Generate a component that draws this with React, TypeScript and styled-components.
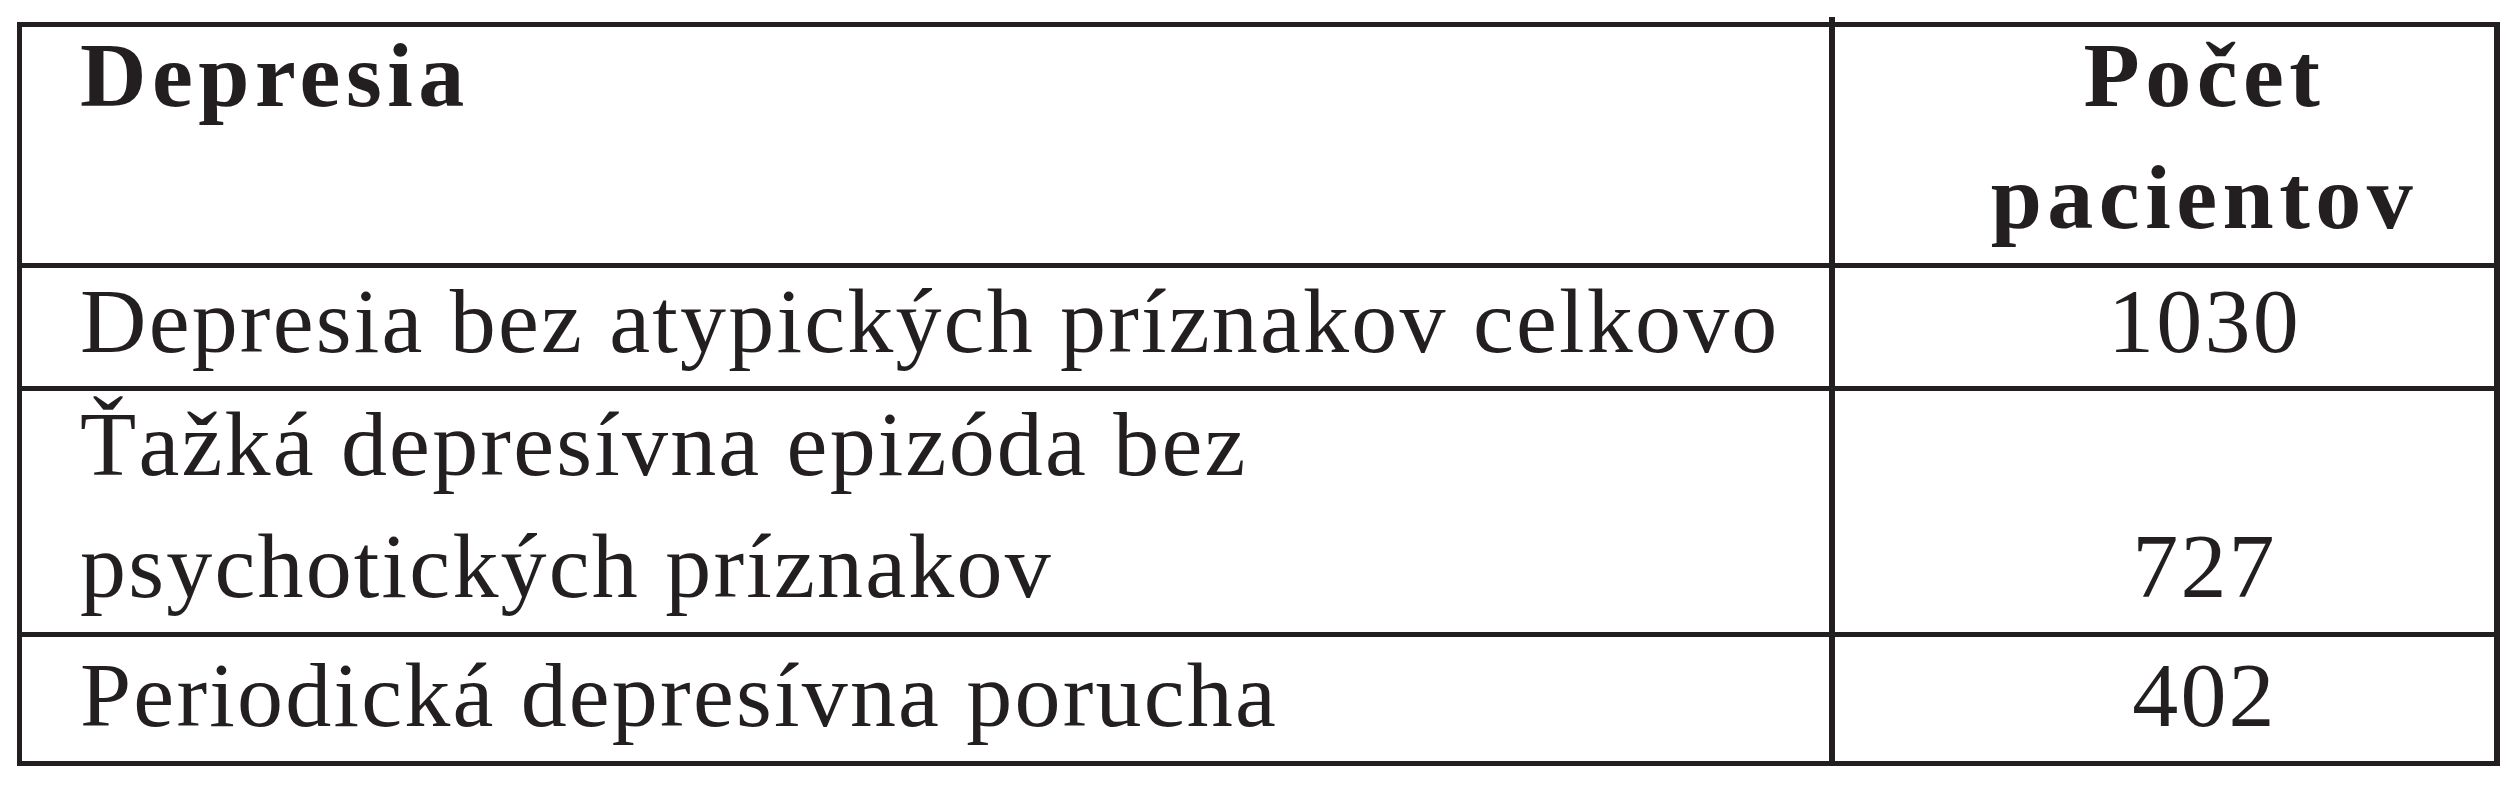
import React from 'react';
import styled, { createGlobalStyle } from 'styled-components';

const INK = '#231f20';
const LINE = 122;

const GlobalStyle = createGlobalStyle`
  html, body {
    margin: 0;
    padding: 0;
    background: #fff;
  }
  body {
    font-family: 'Liberation Serif', 'Times New Roman', serif;
    color: ${INK};
  }
`;

type Row = {
  label: React.ReactNode;
  value: string;
  height: number;
  shift: number;
  valueSkip?: number;
};

const rows: Row[] = [
  { label: 'Depresia bez atypických príznakov celkovo', value: '1030', height: 118, shift: -8 },
  {
    label: (
      <>
        Ťažká depresívna epizóda bez
        <br />
        psychotických príznakov
      </>
    ),
    value: '727',
    height: 241,
    shift: -8,
    valueSkip: 1,
  },
  { label: 'Periodická depresívna porucha', value: '402', height: 124, shift: -3 },
];

export default function App() {
  return (
    <>
      <GlobalStyle />
      <Table>
        <TableRow $height={236}>
          <LabelCell>
            <Text $shift={-13} $bold>
              Depresia
            </Text>
          </LabelCell>
          <ValueCell $tick>
            <Text $shift={-13} $bold>
              Počet
              <br />
              pacientov
            </Text>
          </ValueCell>
        </TableRow>
        {rows.map((r, i) => (
          <TableRow key={i} $height={r.height}>
            <LabelCell>
              <Text $shift={r.shift}>{r.label}</Text>
            </LabelCell>
            <ValueCell>
              <Text $shift={r.shift} $skip={r.valueSkip}>
                {r.value}
              </Text>
            </ValueCell>
          </TableRow>
        ))}
      </Table>
    </>
  );
}

const Table = styled.div`
  box-sizing: border-box;
  width: 2483px;
  margin: 22px 0 0 17px;
  border: 5px solid ${INK};
  border-right-width: 6px;
`;

const TableRow = styled.div<{ $height: number }>`
  display: grid;
  grid-template-columns: 1813px 1fr;
  height: ${(p) => p.$height}px;

  & + & {
    border-top: 5px solid ${INK};
  }
`;

const LabelCell = styled.div`
  box-sizing: border-box;
  padding-left: 58px;
  border-right: 6px solid ${INK};
`;

const ValueCell = styled.div<{ $tick?: boolean }>`
  position: relative;
  padding-left: 80px;
  text-align: center;

  &::before {
    content: '';
    display: ${(p) => (p.$tick ? 'block' : 'none')};
    position: absolute;
    left: -6px;
    top: -10px;
    width: 6px;
    height: 10px;
    background: ${INK};
  }
`;

const Text = styled.div<{ $shift: number; $skip?: number; $bold?: boolean }>`
  margin-top: ${(p) => p.$shift + (p.$skip ?? 0) * LINE}px;
  font-size: 92px;
  line-height: ${LINE}px;
  font-weight: ${(p) => (p.$bold ? 700 : 400)};
  letter-spacing: ${(p) => (p.$bold ? 5.5 : 2.2)}px;
  white-space: nowrap;
`;
